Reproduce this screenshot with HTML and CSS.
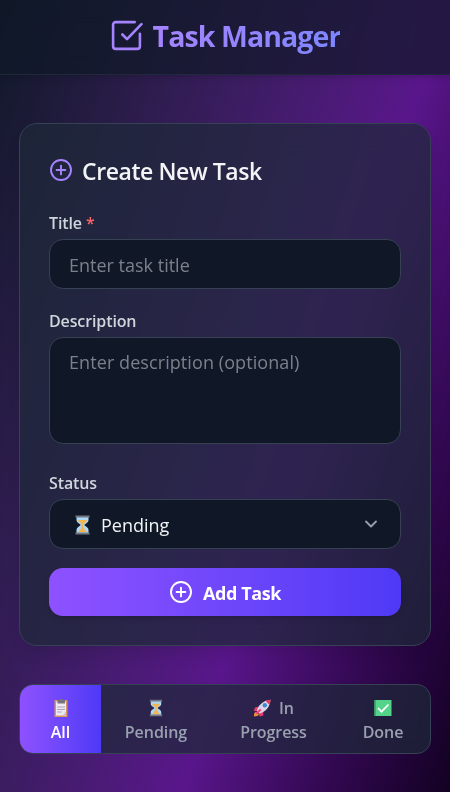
FILE: index.html
```html
<!DOCTYPE html>
<html lang="en">
<head>
<meta charset="utf-8">
<meta name="viewport" content="width=device-width, initial-scale=1">
<title>Task Manager</title>
<link rel="stylesheet" href="styles.css">
</head>
<body>
<svg class="defs" aria-hidden="true">
  <defs>
    <symbol id="plus-circle" viewBox="0 0 24 24"><circle cx="12" cy="12" r="10"/><path d="M12 7.600v8.800M7.600 12h8.800"/></symbol>
    <symbol id="hourglass" viewBox="0 0 16 20">
      <path d="M2 2h12v3c0 3-4 3.800-4 5s4 2 4 5v3H2v-3c0-3 4-3.800 4-5S2 8 2 5z" fill="#acd9f5"/>
      <path d="M3.500 5h9c-.4 2.600-3.600 3-3.900 5.300L10 14.200l2.500 2.800h-9L6 14.200l1.500-3.900C7.200 8 3.900 7.600 3.500 5z" fill="#f3b551"/>
      <path d="M1 .5h14v2H1zM1 17.500h14v2H1z" fill="#737781"/>
    </symbol>
  </defs>
</svg>
<header class="topbar">
  <svg class="logo" viewBox="0 0 32 32"><path d="M24 3H5.500A2.500 2.500 0 0 0 3 5.500v21A2.500 2.500 0 0 0 5.500 29h21a2.500 2.500 0 0 0 2.500-2.500V14.300"/><path d="m12 15 4.500 4.500L30.500 5"/></svg>
  <h1 class="brand">Task Manager</h1>
</header>
<main class="content">
  <form class="card">
    <h2 class="heading"><svg class="icon"><use href="#plus-circle"/></svg><span>Create New Task</span></h2>
    <div class="field field-title">
      <label class="label" for="title">Title <span class="required">*</span></label>
      <input class="control input" id="title" placeholder="Enter task title">
    </div>
    <div class="field">
      <label class="label" for="description">Description</label>
      <textarea class="control area" id="description" placeholder="Enter description (optional)"></textarea>
    </div>
    <div class="field field-status">
      <span class="label">Status</span>
      <div class="control select" role="combobox" aria-label="Status">
        <svg class="glass"><use href="#hourglass"/></svg>
        <span class="value">Pending</span>
        <svg class="chevron" viewBox="0 0 14 8"><path d="m2 1.500 5 5 5-5"/></svg>
      </div>
    </div>
    <button class="submit" type="button"><svg class="icon"><use href="#plus-circle"/></svg><span>Add Task</span></button>
  </form>
  <nav class="filters">
    <button class="filter active" type="button">
      <span class="row"><svg class="emoji" viewBox="0 0 18 18"><path d="M2.500 1h13v17h-13z" fill="#d9965c"/><path d="M4 2.500h10v14H4z" fill="#eeeaf3"/><path d="M5.500 1h2l1-1h2l1 1h1.500v3.500H5.500z" fill="#777480"/><path d="M5 8h8M5 10.500h8M5 13h5" stroke="#a9a4b6"/><path d="m10.500 16.500 3.500-4v4z" fill="#c8c2d3"/></svg></span>
      <span>All</span>
    </button>
    <button class="filter" type="button">
      <span class="row"><svg class="emoji small"><use href="#hourglass"/></svg></span>
      <span>Pending</span>
    </button>
    <button class="filter" type="button">
      <span class="row"><svg class="emoji" viewBox="0 0 18 18"><path d="M1 17.500c-.4-2.500.4-4.500 2.300-4.500L6 15c-.5 1.800-2.400 2.500-5 2.500z" fill="#f18b39"/><path d="M5.500 7.500 2 8.500.8 12l4 .2zM10.300 12.500v4l-3.700 1-.8-4z" fill="#eb3c72"/><path d="M3.800 12C5 6.500 9.800 1.500 17.500.7c-.5 7-4.500 12-11 13.800z" fill="#ddd5e7"/><path d="M12.500 1.800c1.500-.6 3-1 5-1.100-.1 2-.5 3.700-1.100 5.200z" fill="#ee365f"/><circle cx="11.800" cy="6.300" r="2.200" fill="#398bd5"/><path d="m3.300 14.500 4.500-4" stroke="#ef3f78" stroke-width="2"/></svg><span>In</span></span>
      <span>Progress</span>
    </button>
    <button class="filter" type="button">
      <span class="row"><svg class="emoji" viewBox="0 0 18 18"><path d="M.5 1h17v16H.5z" fill="#55d38a"/><path d="M.5 1H2v16H.5z" fill="#3cac71"/><path d="m4 9 3.500 3.700L14.500 5.500" fill="none" stroke="#fff" stroke-width="1.700"/></svg></span>
      <span>Done</span>
    </button>
  </nav>
</main>
</body>
</html>
```
FILE: styles.css
```css
* { box-sizing: border-box; }
body {
  margin: 0;
  height: 792px;
  overflow: hidden;
  font-family: "Open Sans", "Noto Sans", sans-serif;
  color: #f3f4f6;
  background: linear-gradient(to bottom right in oklab, #101828, #59168b, #000) 0 0 / 100% 1330px no-repeat #000;
}
.defs { position: absolute; width: 0; height: 0; }
svg { display: block; flex: none; }
h1, h2 { margin: 0; }
button, input, textarea { font-family: inherit; }

.topbar {
  display: flex;
  align-items: center;
  justify-content: center;
  gap: 10px;
  height: 75px;
  background: rgb(16 24 40 / 70%);
  border-bottom: 1px solid #1e2939;
  box-shadow: 0 4px 6px -1px rgb(0 0 0 / 10%), 0 2px 4px -2px rgb(0 0 0 / 10%);
  backdrop-filter: blur(12px);
}
.logo { width: 33px; height: 33px; margin-top: -4px; fill: none; stroke: #a684ff; stroke-width: 2.5; stroke-linecap: round; stroke-linejoin: round; }
.brand {
  font-size: 28.5px;
  line-height: 42px;
  font-weight: 700;
  letter-spacing: -.92px;
  margin-top: -2px;
  background: linear-gradient(to right in oklab, #a684ff, #7c86ff);
  background-clip: text;
  color: transparent;
}

.content { padding: 48px 19px 0; }
.card {
  height: 523px;
  padding: 28px 29px;
  border: 1px solid #364153;
  border-radius: 18px;
  background: rgb(30 41 57 / 70%);
  box-shadow: 0 10px 15px -3px rgb(0 0 0 / 10%);
  backdrop-filter: blur(16px);
}
.heading { display: flex; align-items: center; gap: 9px; height: 38px; font-size: 23px; font-weight: 600; line-height: 38px; letter-spacing: -.42px; }
.icon { width: 24px; height: 24px; fill: none; stroke: currentColor; stroke-width: 1.9; stroke-linecap: round; }
.heading .icon { color: #a684ff; margin-top: -3px; }
.field { margin-top: 21px; }
.label { display: block; height: 27px; line-height: 23px; font-size: 16px; font-weight: 600; letter-spacing: -.12px; color: #d1d5dc; }
.field-title .label { height: 28px; line-height: 25px; }
.required { color: #ff6467; }
.control {
  display: block;
  width: 100%;
  padding: 0 19px;
  border: 1px solid #364153;
  border-radius: 14px;
  background: #101828;
  font-size: 18px;
  color: #f3f4f6;
}
.control::placeholder { color: #7b818b; opacity: 1; }
.input { height: 50px; padding-top: 2px; }
.area { height: 107px; padding-top: 12px; line-height: 25px; letter-spacing: .08px; resize: none; }
.field-status { margin-top: 28px; }
.select { display: flex; align-items: center; height: 50px; padding: 0 22px 0 24px; }
.glass { width: 17px; height: 20px; margin-top: 1px; }
.value { margin-left: 10px; padding-top: 1px; }
.chevron { width: 14px; height: 8px; margin-left: auto; fill: none; stroke: #99a1af; stroke-width: 1.8; stroke-linecap: round; stroke-linejoin: round; }
.submit {
  display: flex;
  align-items: center;
  justify-content: center;
  gap: 10px;
  width: 100%;
  height: 48px;
  margin-top: 19px;
  padding: 0;
  border: 0;
  border-radius: 14px;
  color: #fff;
  font-size: 18px;
  font-weight: 700;
  letter-spacing: -.42px;
  background: linear-gradient(to right in oklab, #8e51ff, #4f39f6);
  box-shadow: 0 4px 6px -1px rgb(0 0 0 / 10%), 0 2px 4px -2px rgb(0 0 0 / 10%);
}
.submit .icon { margin-top: -1px; }
.submit span { padding-top: 1px; }

.filters {
  display: grid;
  grid-template-columns: 81px 110px 125px 1fr;
  height: 70px;
  margin-top: 38px;
  overflow: hidden;
  border: 1px solid #364153;
  border-radius: 14px;
  background: rgb(30 41 57 / 70%);
  backdrop-filter: blur(12px);
}
.filter {
  display: flex;
  flex-direction: column;
  align-items: center;
  padding: 11px 0 0;
  border: 0;
  background: none;
  color: #99a1af;
  font-size: 16px;
  font-weight: 600;
  letter-spacing: -.05px;
  line-height: 24px;
}
.filter.active { color: #fff; background: linear-gradient(to right in oklab, #8e51ff, #4f39f6); }
.row { display: flex; align-items: center; justify-content: center; gap: 8px; height: 24px; }
.emoji { width: 18px; height: 18px; }
.emoji.small { width: 14px; }
```
